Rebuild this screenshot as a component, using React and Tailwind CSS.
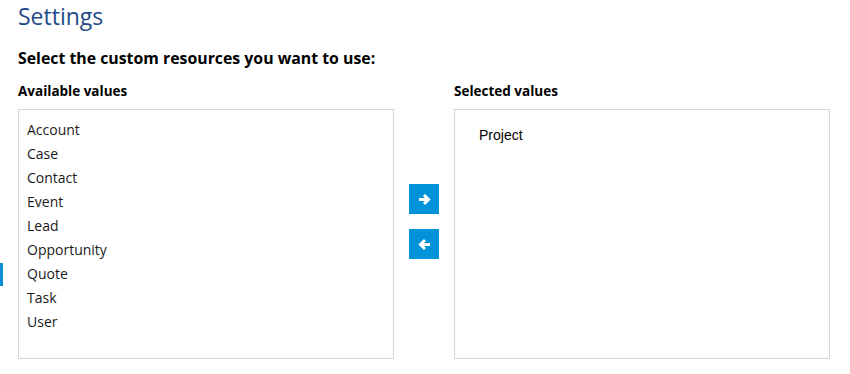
import React from "react";

const items = ["Account", "Case", "Contact", "Event", "Lead", "Opportunity", "Quote", "Task", "User"];

function Arrow({ dir }) {
  const d = dir === "right" ? "M1 6.5h9.5M6 2 10.5 6.5 6 11" : "M12 6.5H2.5M7 2 2.5 6.5 7 11";
  return (
    <svg width="13" height="13" viewBox="0 0 13 13" fill="none">
      <path d={d} stroke="white" strokeWidth="3" strokeLinecap="butt" strokeLinejoin="miter" />
    </svg>
  );
}

export default function App() {
  return (
    <div className="relative w-[850px] h-[374px] bg-white pl-[18px] text-[#1a1a1a]" style={{ fontFamily: '"Open Sans", sans-serif' }}>
      <div className="absolute left-0 top-[263px] w-[3px] h-[23px] bg-[#0a8fd6]" />
      <h1 className="text-[23px] leading-[32px] text-[#1f4b87] font-normal">Settings</h1>
      <h2 className="mt-[14px] text-[15.85px] leading-[24px] font-bold text-black">Select the custom resources you want to use:</h2>
      <div className="mt-[11px] flex">
        <div className="flex flex-col w-[376px]">
          <div className="text-[13.5px] leading-[20px] font-bold text-black">Available values</div>
          <div className="mt-[8px] h-[250px] border border-[#d6d6d6] pt-[8px] pl-[8px]">
            {items.map((it) => (
              <div key={it} className="text-[14px] leading-[24px] text-[#1a1a1a]">{it}</div>
            ))}
          </div>
        </div>
        <div className="w-[60px] flex flex-col items-center pt-[103px] gap-[15px]">
          <button className="w-[30px] h-[30px] bg-[#0093d9] flex items-center justify-center">
            <Arrow dir="right" />
          </button>
          <button className="w-[30px] h-[30px] bg-[#0093d9] flex items-center justify-center">
            <Arrow dir="left" />
          </button>
        </div>
        <div className="flex flex-col w-[376px]">
          <div className="text-[13.5px] leading-[20px] font-bold text-black">Selected values</div>
          <div className="mt-[8px] h-[250px] border border-[#d6d6d6] pt-[13px] pl-[24px]">
            <div className="text-[14px] leading-[24px] text-black" style={{ fontFamily: '"Liberation Sans", Arial, sans-serif' }}>Project</div>
          </div>
        </div>
      </div>
    </div>
  );
}
